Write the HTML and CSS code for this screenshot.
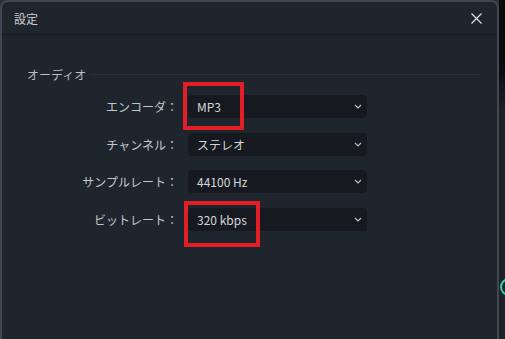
FILE: index.html
```html
<!DOCTYPE html>
<html lang="ja">
<head>
    <meta charset="UTF-8">
    <title>設定</title>
    <link rel="stylesheet" href="styles.css">
</head>
<body>
    <div class="screen">
        <div class="dialog">
            <div class="header">
                <span class="title">設定</span>
                <svg class="close" width="11" height="11" viewBox="0 0 11 11">
                    <path d="M0.5 0.5L10.5 10.5M10.5 0.5L0.5 10.5" stroke="#e6e8eb" stroke-width="1.1" fill="none"/>
                </svg>
            </div>

            <div class="content">
                <div class="group-title">
                    <span>オーディオ</span>
                    <div class="rule"></div>
                </div>

                <div class="rows">
                    <div class="row">
                        <label>エンコーダ：</label>
                        <div class="select">
                            <span>MP3</span>
                            <svg class="chev" width="8" height="5" viewBox="0 0 8 5"><path d="M1 1L4 4L7 1" stroke="#b9bec6" stroke-width="1.2" fill="none"/></svg>
                            <div class="mark mark-encoder"></div>
                        </div>
                    </div>
                    <div class="row">
                        <label>チャンネル：</label>
                        <div class="select">
                            <span>ステレオ</span>
                            <svg class="chev" width="8" height="5" viewBox="0 0 8 5"><path d="M1 1L4 4L7 1" stroke="#b9bec6" stroke-width="1.2" fill="none"/></svg>
                        </div>
                    </div>
                    <div class="row">
                        <label>サンプルレート：</label>
                        <div class="select">
                            <span>44100 Hz</span>
                            <svg class="chev" width="8" height="5" viewBox="0 0 8 5"><path d="M1 1L4 4L7 1" stroke="#b9bec6" stroke-width="1.2" fill="none"/></svg>
                        </div>
                    </div>
                    <div class="row">
                        <label>ビットレート：</label>
                        <div class="select">
                            <span>320 kbps</span>
                            <svg class="chev" width="8" height="5" viewBox="0 0 8 5"><path d="M1 1L4 4L7 1" stroke="#b9bec6" stroke-width="1.2" fill="none"/></svg>
                            <div class="mark mark-bitrate"></div>
                        </div>
                    </div>
                </div>
            </div>
        </div>

        <div class="side">
            <div class="ring"></div>
        </div>
    </div>
</body>
</html>
```

FILE: styles.css
```css
* {
    margin: 0;
    padding: 0;
    box-sizing: border-box;
}

body {
    font-family: "Noto Sans CJK JP", "Noto Sans", sans-serif;
    background: #2a2e35;
    width: 505px;
    height: 339px;
    overflow: hidden;
}

.screen {
    display: flex;
    height: 339px;
}

.dialog {
    width: 499px;
    height: 345px;
    background: #1f252d;
    border: 2px solid #414750;
    border-bottom: none;
    border-radius: 8px 8px 0 0;
}

.header {
    height: 33px;
    display: flex;
    align-items: center;
    justify-content: space-between;
    padding: 0 15px 0 12px;
    border-bottom: 1px solid #171b21;
}

.title {
    font-size: 12px;
    color: #c9ccd1;
}

.content {
    padding: 31px 16px 0 25px;
}

.group-title {
    display: flex;
    align-items: center;
    gap: 4px;
    font-size: 12px;
    color: #b9bdc3;
    line-height: 17px;
}

.rule {
    flex: 1;
    height: 1px;
    background: #283038;
}

.rows {
    display: flex;
    flex-direction: column;
    gap: 14.5px;
    margin-top: 12px;
}

.row {
    display: flex;
    align-items: center;
    gap: 10px;
}

.row label {
    width: 151px;
    text-align: right;
    font-size: 12px;
    color: #c3c7cd;
}

.select {
    position: relative;
    width: 179px;
    height: 23px;
    background: #161a20;
    border-radius: 4px;
    display: flex;
    align-items: center;
    justify-content: space-between;
    padding: 0 5px 0 9px;
    font-size: 12px;
    color: #d2d5da;
}

.mark {
    position: absolute;
    border: 4px solid #e41e26;
}

.mark-encoder {
    left: -5px;
    top: -13px;
    width: 61px;
    height: 48px;
}

.mark-bitrate {
    left: -4px;
    top: -7px;
    width: 76px;
    height: 46px;
}

.side {
    position: relative;
    flex: 1;
    background: linear-gradient(#0b0c0e 0, #0b0c0e 70px, #1c2128 110px);
    overflow: hidden;
}

.ring {
    position: absolute;
    left: 1px;
    top: 278px;
    width: 18px;
    height: 18px;
    border: 2px solid #3fcfb1;
    border-radius: 50%;
}
```
